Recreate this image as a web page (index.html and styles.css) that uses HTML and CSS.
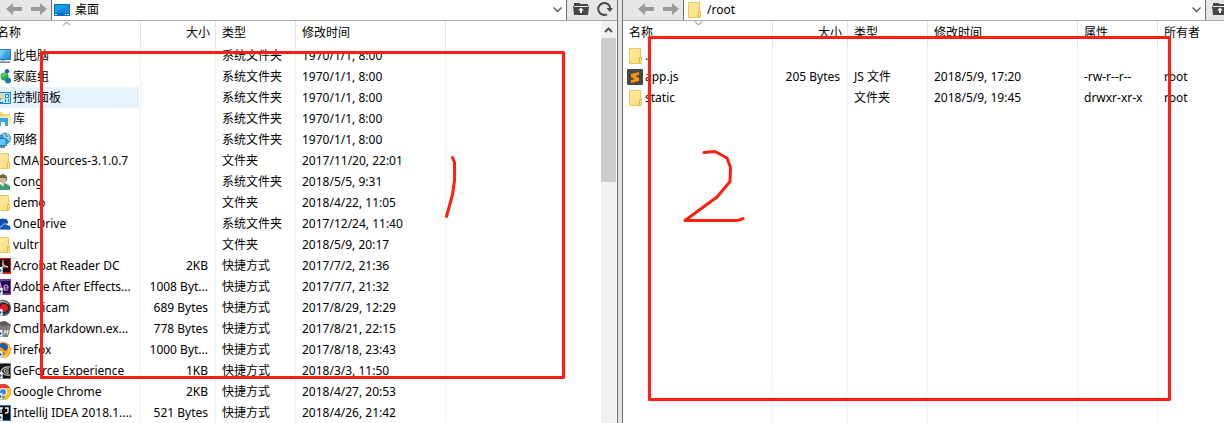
FILE: index.html
```html
<!DOCTYPE html>
<html lang="zh-CN">
<head>
<meta charset="utf-8">
<title>文件传输</title>
<link rel="stylesheet" href="styles.css">
</head>
<body>
<svg class="defs" aria-hidden="true">
  <linearGradient id="blue" x1="0" y1="0" x2="1" y2="1"><stop offset="0" stop-color="#6cc8f8"/><stop offset="1" stop-color="#1d8fe0"/></linearGradient>
  <linearGradient id="yellow" x1="0" y1="0" x2="1" y2="1"><stop offset="0" stop-color="#ffe9a2"/><stop offset="1" stop-color="#fbdd7c"/></linearGradient>
  <symbol id="back" viewBox="0 0 16 14"><path d="M0 7 7 1v4h9v4H7v4z" fill="#999"/></symbol>
  <symbol id="next" viewBox="0 0 16 14"><path d="M16 7 9 1v4H0v4h9v4z" fill="#999"/></symbol>
  <symbol id="up" viewBox="0 0 16 16"><path d="M1 3V2h6v1h8v2H1zM0 5h1v1h14V5h1l-1 9H1z" fill="#454545"/><path d="M8 6.500l3 3H9V12H7V9.500H5z" fill="#f4f4f4"/></symbol>
  <symbol id="reload" viewBox="0 0 16 16"><path d="M10 13.300A6 6 0 1 1 13.200 7" fill="none" stroke="#4a4a4a" stroke-width="2"/><path d="M9.500 7H16l-3.200 4z" fill="#4a4a4a"/></symbol>
  <symbol id="desktop" viewBox="0 0 16 16"><path d="M0 2h16v12H0z" fill="#0b70bd"/><path d="M1 3h14v8H1z" fill="#12a0f5"/><path d="M1 11 15 3v8z" fill="#1689dc"/><path d="M1 12h2v1H1zM11 12h1v1h-1zM13 12h2v1h-2z" fill="#fff"/></symbol>
  <symbol id="folder" viewBox="0 0 16 16"><path d="M2.500.500h11v8.500h1v6.500H2.500z" fill="url(#yellow)" stroke="#eac95a"/><path d="M12.500 15V9.500H14" fill="none" stroke="#dfb943"/></symbol>
  <symbol id="pc" viewBox="0 0 16 16"><path d="M0 1h16v11H0z" fill="#2b7fb5"/><path d="M1 2h14v9H1z" fill="url(#blue)"/><path d="M1 2h10L5 11H1z" fill="#8ddcff" opacity=".5"/><path d="M6 12h4v1h5v2H1v-2h5z" fill="#a9b6be"/><path d="M1 14h14v1H1z" fill="#71838e"/></symbol>
  <symbol id="home" viewBox="0 0 16 16"><path d="m9 8 3-5m-3 5 5 4" stroke="#62b8db" stroke-width="1.500"/><circle cx="9.500" cy="7.500" r="4" fill="#31ad4b"/><circle cx="12" cy="2.200" r="2.200" fill="#1265a6"/><circle cx="13" cy="11.500" r="3" fill="#1979bc"/><path d="M7 5q3-2 5 0L9 8H6z" fill="#5cca68"/></symbol>
  <symbol id="panel" viewBox="0 0 16 16"><path d="M0 2h16v12H0z" fill="#1687cf"/><path d="M1 3h14v10H1z" fill="#b9e5fa"/><path d="M4 4a3 3 0 1 0 4 4H5z" fill="#f09b27"/><path d="M6 4a3 3 0 0 1 3 3H6z" fill="#fbd45b"/><path d="M10 4h4v4h-4zM10 9h1v3h-1zM13 9h1v3h-1zM3 12h5v1H3z" fill="#1c87cc"/><path d="M11 5h2v2h-2z" fill="#fff"/></symbol>
  <symbol id="library" viewBox="0 0 16 16"><path d="M0 1h7l1 2h7v3h1v7H0z" fill="#f8d77c"/><path d="M0 5h16v8H0z" fill="#ffe9a6"/><path d="M3 7h10v8h-3v-4H6v4H3z" fill="#31a8e4"/></symbol>
  <symbol id="network" viewBox="0 0 16 16"><circle cx="10" cy="6.500" r="6" fill="#4a93bd"/><path d="M7 2q5 1 2 4 5-1 6 3M12 1l2 5" fill="none" stroke="#a9d9ed" stroke-width="1.500"/><path d="M0 6h11l1 8H1z" fill="#187cbf"/><path d="M1 7h9l1 6H1z" fill="#60c9fa"/><path d="M4 14h6v2H2z" fill="#71889a"/></symbol>
  <symbol id="user" viewBox="0 0 16 16"><circle cx="8" cy="4.500" r="4.200" fill="#73604f"/><path d="M5 4h6v3l-3 3-3-3z" fill="#d9b493"/><path d="M2 16q0-6 6-6l2-1 5 3v4z" fill="#439a75"/><path d="M6 10h3l-1 3z" fill="#edf2ee"/></symbol>
  <symbol id="cloud" viewBox="0 0 16 16"><path d="M1 12Q-1 8 3 7q1-6 7-4 3 0 3 4l-7 6z" fill="#0b4eb0"/><path d="M5 14q-2-3 2-4 2-4 6-1 3 0 3 3 0 2-1 2z" fill="#1456b8" stroke="#fff" stroke-width=".7"/></symbol>
  <symbol id="lnk" viewBox="0 0 16 16"><path d="M0 9h8v7H0z" fill="#f7fafc"/><path d="M1 15q0-3 3-3v-2l3 2.500L4 15v-1q-2 0-3 1z" fill="#1d67ad"/><path d="M7.500 9v6.500H0" fill="none" stroke="#a9b9c3"/></symbol>
  <symbol id="acrobat" viewBox="0 0 16 16"><path d="M0 0h16v16H0z" fill="#d71920"/><path d="M0 1h15v13H0z" fill="#2a0b0b"/><path d="M8 2v5l5 2q-4-1-7 1 3-2 2-5" fill="none" stroke="#e8dede"/></symbol>
  <symbol id="ae" viewBox="0 0 16 16"><path d="M0 0h16v16H0z" fill="#6b3bb5"/><path d="M1 2h14v12H1z" fill="#24063b"/><path d="m3 11 2-7 2 7M4 9h3m2 0h4q0-3-2-3T9 9t2 2h2" fill="none" stroke="#d5a0ff" stroke-width="1.200"/></symbol>
  <symbol id="bandicam" viewBox="0 0 16 16"><circle cx="8" cy="8" r="8" fill="#474747"/><path d="M2 4q5-5 11 0" fill="none" stroke="#aaa" stroke-width="1.500"/><circle cx="9" cy="8" r="5" fill="#111"/><circle cx="9" cy="8" r="4" fill="#e51b27"/></symbol>
  <symbol id="cmd" viewBox="0 0 16 16"><path d="m1 2 9-2 6 4-3 12H4z" fill="#7d7d7d"/><path d="m1 2 9-2 6 4-9 1z" fill="#5c5c5c"/><path d="m9 14 1-5 1 3 2-3-1 5" fill="none" stroke="#e4e4e4"/></symbol>
  <symbol id="firefox" viewBox="0 0 16 16"><circle cx="8" cy="8" r="8" fill="#ff8b16"/><circle cx="8" cy="6.500" r="5.500" fill="#225ca8"/><path d="M3 5q4 0 6 3 3 2 4-3l1-3q3 7-1 11T3 14l-1-5q4 5 8 2-5 0-7-6" fill="#ff9b18"/><path d="M13 3q4 5 0 10-3 3-6 2 5-2 6-7z" fill="#ffcf33"/></symbol>
  <symbol id="geforce" viewBox="0 0 16 16"><path d="M0 0h16v16H0z" fill="#747474"/><path d="M1 1h14v14H1z" fill="#171717"/><path d="M15 4Q9 3 6 8q3 5 9 4M14 6q-4-1-5 2 2 3 4 2V8h-2" fill="none" stroke="#ccc" stroke-width="1.200"/></symbol>
  <symbol id="chrome" viewBox="0 0 16 16"><circle cx="8" cy="8" r="8" fill="#3aa757"/><path d="M1 4a8 8 0 0 1 14 0L8 6 4 10z" fill="#e94235"/><path d="M15 4a8 8 0 0 1-7 12l3-6-1-6z" fill="#fbc116"/><circle cx="8" cy="8" r="4" fill="#fff"/><circle cx="8" cy="8" r="3" fill="#4285f4"/></symbol>
  <symbol id="idea" viewBox="0 0 16 16"><path d="M0 0h16v16H0z" fill="#167fd2"/><path d="M1 1h14v14H1z" fill="#090909"/><path d="M4 3h4M6 3v5M10 3h3v4q0 1-3 1" fill="none" stroke="#fff" stroke-width="1.300"/></symbol>
  <symbol id="sublime" viewBox="0 0 16 16"><rect width="16" height="16" rx="1" fill="#474747"/><path d="m4 5 8-2v3L8 7l4 2v3l-8 2v-3l4-1-4-2z" fill="#ff9800"/></symbol>
</svg>

<main class="app">
  <section class="pane" aria-label="本地">
    <header class="bar">
      <nav class="nav">
        <button type="button" aria-label="后退"><svg class="arrow"><use href="#back"/></svg></button>
        <button type="button" aria-label="前进"><svg class="arrow"><use href="#next"/></svg></button>
      </nav>
      <div class="address">
        <svg class="icon"><use href="#desktop"/></svg>
        <select class="path" aria-label="本地路径"><option>桌面</option></select>
        <svg class="chevron" viewBox="0 0 9 6"><path d="m.500.500 4 4 4-4"/></svg>
      </div>
      <div class="tools">
        <button type="button" aria-label="上级目录"><svg class="icon"><use href="#up"/></svg></button>
        <button type="button" aria-label="刷新"><svg class="icon"><use href="#reload"/></svg></button>
      </div>
    </header>
    <div class="content">
      <table class="files">
        <colgroup><col class="c-name"><col class="c-size"><col class="c-type"><col class="c-date"><col></colgroup>
        <thead><tr><th><svg class="sort" viewBox="0 0 9 5"><path d="m1 4.500 3.500-3.500L8 4.500"/></svg>名称</th><th class="num">大小</th><th>类型</th><th>修改时间</th><th></th></tr></thead>
        <tbody>
          <tr><td><span class="name"><svg class="icon"><use href="#pc"/></svg>此电脑</span></td><td></td><td>系统文件夹</td><td>1970/1/1, 8:00</td><td></td></tr>
          <tr><td><span class="name"><svg class="icon"><use href="#home"/></svg>家庭组</span></td><td></td><td>系统文件夹</td><td>1970/1/1, 8:00</td><td></td></tr>
          <tr><td class="hot"><span class="name"><svg class="icon"><use href="#panel"/></svg>控制面板</span></td><td></td><td>系统文件夹</td><td>1970/1/1, 8:00</td><td></td></tr>
          <tr><td><span class="name"><svg class="icon"><use href="#library"/></svg>库</span></td><td></td><td>系统文件夹</td><td>1970/1/1, 8:00</td><td></td></tr>
          <tr><td><span class="name"><svg class="icon"><use href="#network"/></svg>网络</span></td><td></td><td>系统文件夹</td><td>1970/1/1, 8:00</td><td></td></tr>
          <tr><td><span class="name"><svg class="icon"><use href="#folder"/></svg>CMA-Sources-3.1.0.7</span></td><td></td><td>文件夹</td><td>2017/11/20, 22:01</td><td></td></tr>
          <tr><td><span class="name"><svg class="icon"><use href="#user"/></svg>Cong</span></td><td></td><td>系统文件夹</td><td>2018/5/5, 9:31</td><td></td></tr>
          <tr><td><span class="name"><svg class="icon"><use href="#folder"/></svg>demo</span></td><td></td><td>文件夹</td><td>2018/4/22, 11:05</td><td></td></tr>
          <tr><td><span class="name"><svg class="icon"><use href="#cloud"/></svg>OneDrive</span></td><td></td><td>系统文件夹</td><td>2017/12/24, 11:40</td><td></td></tr>
          <tr><td><span class="name"><svg class="icon"><use href="#folder"/></svg>vultr</span></td><td></td><td>文件夹</td><td>2018/5/9, 20:17</td><td></td></tr>
          <tr><td><span class="name"><svg class="icon"><use href="#acrobat"/><use href="#lnk"/></svg>Acrobat Reader DC</span></td><td class="num">2KB</td><td>快捷方式</td><td>2017/7/2, 21:36</td><td></td></tr>
          <tr><td><span class="name"><svg class="icon"><use href="#ae"/><use href="#lnk"/></svg>Adobe After Effects...</span></td><td class="num">1008 Byt...</td><td>快捷方式</td><td>2017/7/7, 21:32</td><td></td></tr>
          <tr><td><span class="name"><svg class="icon"><use href="#bandicam"/><use href="#lnk"/></svg>Bandicam</span></td><td class="num">689 Bytes</td><td>快捷方式</td><td>2017/8/29, 12:29</td><td></td></tr>
          <tr><td><span class="name"><svg class="icon"><use href="#cmd"/><use href="#lnk"/></svg>Cmd Markdown.ex...</span></td><td class="num">778 Bytes</td><td>快捷方式</td><td>2017/8/21, 22:15</td><td></td></tr>
          <tr><td><span class="name"><svg class="icon"><use href="#firefox"/><use href="#lnk"/></svg>Firefox</span></td><td class="num">1000 Byt...</td><td>快捷方式</td><td>2017/8/18, 23:43</td><td></td></tr>
          <tr><td><span class="name"><svg class="icon"><use href="#geforce"/><use href="#lnk"/></svg>GeForce Experience</span></td><td class="num">1KB</td><td>快捷方式</td><td>2018/3/3, 11:50</td><td></td></tr>
          <tr><td><span class="name"><svg class="icon"><use href="#chrome"/><use href="#lnk"/></svg>Google Chrome</span></td><td class="num">2KB</td><td>快捷方式</td><td>2018/4/27, 20:53</td><td></td></tr>
          <tr><td><span class="name"><svg class="icon"><use href="#idea"/><use href="#lnk"/></svg>IntelliJ IDEA 2018.1....</span></td><td class="num">521 Bytes</td><td>快捷方式</td><td>2018/4/26, 21:42</td><td></td></tr>
        </tbody>
      </table>
      <div class="scrollbar">
        <button type="button" aria-label="向上滚动"><svg class="chevron" viewBox="0 0 9 6"><path class="bold" d="m1 5 3.500-3.500L8 5"/></svg></button>
        <div class="thumb"></div>
      </div>
    </div>
  </section>

  <div class="splitter"></div>

  <section class="pane" aria-label="远程">
    <header class="bar">
      <nav class="nav">
        <button type="button" aria-label="后退"><svg class="arrow"><use href="#back"/></svg></button>
        <button type="button" aria-label="前进"><svg class="arrow"><use href="#next"/></svg></button>
      </nav>
      <div class="address">
        <svg class="icon"><use href="#folder"/></svg>
        <select class="path" aria-label="远程路径"><option>/root</option></select>
        <svg class="chevron" viewBox="0 0 9 6"><path d="m.500.500 4 4 4-4"/></svg>
      </div>
      <div class="tools">
        <button type="button" aria-label="上级目录"><svg class="icon"><use href="#up"/></svg></button>
        <button type="button" aria-label="刷新"><svg class="icon"><use href="#reload"/></svg></button>
      </div>
    </header>
    <div class="content">
      <table class="files">
        <colgroup><col class="c-name"><col class="c-size"><col class="c-type"><col class="c-date"><col class="c-attr"><col></colgroup>
        <thead><tr><th><svg class="sort" viewBox="0 0 9 5"><path d="m1 .500 3.500 3.500L8 .500"/></svg>名称</th><th class="num">大小</th><th>类型</th><th>修改时间</th><th>属性</th><th>所有者</th></tr></thead>
        <tbody>
          <tr><td><span class="name"><svg class="icon"><use href="#folder"/></svg>..</span></td><td></td><td></td><td></td><td></td><td></td></tr>
          <tr><td><span class="name"><svg class="icon"><use href="#sublime"/></svg>app.js</span></td><td class="num">205 Bytes</td><td>JS 文件</td><td>2018/5/9, 17:20</td><td>-rw-r--r--</td><td>root</td></tr>
          <tr><td><span class="name"><svg class="icon"><use href="#folder"/></svg>static</span></td><td></td><td>文件夹</td><td>2018/5/9, 19:45</td><td>drwxr-xr-x</td><td>root</td></tr>
          <tr class="rest"><td></td><td></td><td></td><td></td><td></td><td></td></tr>
        </tbody>
      </table>
    </div>
  </section>
</main>

<svg class="marks" aria-hidden="true">
  <rect x="41.500" y="52.500" width="522" height="325"/>
  <rect x="649.500" y="37.500" width="520" height="362"/>
  <path d="m452.500 157.500 2 5v18l-2 14-6 22"/>
  <path d="m704 152.500 11-1 12 6.500 3.500 9.500-.500 14-13 15.500-32 23.500h49q6 0 9-2"/>
</svg>
</body>
</html>
```

FILE: styles.css
```css
* { box-sizing: border-box; }

html, body { height: 100%; }

body {
  margin: 0;
  overflow: hidden;
  position: relative;
  background: #fff;
  color: #000;
  font: 12px/20px "Noto Sans", "Noto Sans CJK SC", sans-serif;
}

.defs { position: absolute; width: 0; height: 0; }

/* The window is wider than the view, so both outer edges are cut off. */
.app {
  display: grid;
  grid-template-columns: 627fr 4px 634fr;
  height: 100%;
  margin: 0 -32px 0 -9px;
}

.pane {
  display: flex;
  flex-direction: column;
  min-width: 0;
  min-height: 0;
}
.pane:first-child { border-right: 1px solid #707070; }
.pane:last-child { border-left: 1px solid #707070; }
.splitter { background: #e3e3e3; }

button {
  display: flex;
  align-items: center;
  justify-content: center;
  padding: 0;
  border: 0;
  background: none;
}

.icon { flex: none; display: block; width: 16px; height: 16px; }
.arrow { display: block; width: 16px; height: 14px; }

.bar {
  display: flex;
  flex: none;
  height: 21px;
  border-bottom: 1px solid #a9a9a9;
  background: #e6e6e6;
}
.nav { display: flex; gap: 9px; padding: 0 4px 3px 15px; }
.address {
  display: flex;
  flex: 1;
  align-items: center;
  gap: 5px;
  padding: 0 4px 0 2px;
  border: solid #707070;
  border-width: 0 1px;
  background: #fff;
}
.path {
  flex: 1;
  min-width: 0;
  height: 20px;
  padding: 0;
  border: 0;
  appearance: none;
  background: none;
  color: inherit;
  font: inherit;
}
.chevron { width: 9px; height: 6px; fill: none; stroke: #555; stroke-width: 1.3; }
.bold { stroke-width: 2; }
.tools { display: flex; gap: 8px; padding: 0 4px 3px 6px; }

.content { display: flex; flex: 1; min-height: 0; overflow: hidden; }

.files {
  flex: 1;
  width: 100%;
  min-width: 0;
  height: 100%;
  border-collapse: separate;
  border-spacing: 0;
  table-layout: fixed;
}
.c-name { width: 150px; }
.c-size { width: 75px; }
.c-type, .c-attr { width: 80px; }
.c-date { width: 150px; }

th, td {
  padding: 0 7px 0 6px;
  border-right: 1px solid #e9f2fb;
  font-weight: 400;
  text-align: left;
  white-space: nowrap;
}
th { position: relative; height: 24px; padding-right: 5px; border-color: #e3e3e3; }
td { height: 21px; }
th:last-child, td:last-child { border-right: 0; }
td:first-child { padding: 0 1px 0 0; }
.num { text-align: right; }
.rest td { height: auto; }

.name { display: flex; align-items: center; gap: 2px; height: 21px; padding-left: 4px; }
.hot .name { background: #e5f3ff; }

.sort {
  position: absolute;
  top: 0;
  left: 50%;
  width: 9px;
  height: 5px;
  margin-left: -4px;
  fill: none;
  stroke: #777;
}

.scrollbar { flex: none; width: 16px; padding-right: 1px; background: linear-gradient(to right, #f0f0f0 15px, #fff 15px); }
.scrollbar button { width: 15px; height: 17px; }
.thumb { height: 144px; background: #cdcdcd; }

.marks {
  position: absolute;
  inset: 0;
  width: 100%;
  height: 100%;
  fill: none;
  stroke: #ff1e12;
  stroke-width: 3;
  stroke-linecap: round;
  stroke-linejoin: round;
  pointer-events: none;
}
```
